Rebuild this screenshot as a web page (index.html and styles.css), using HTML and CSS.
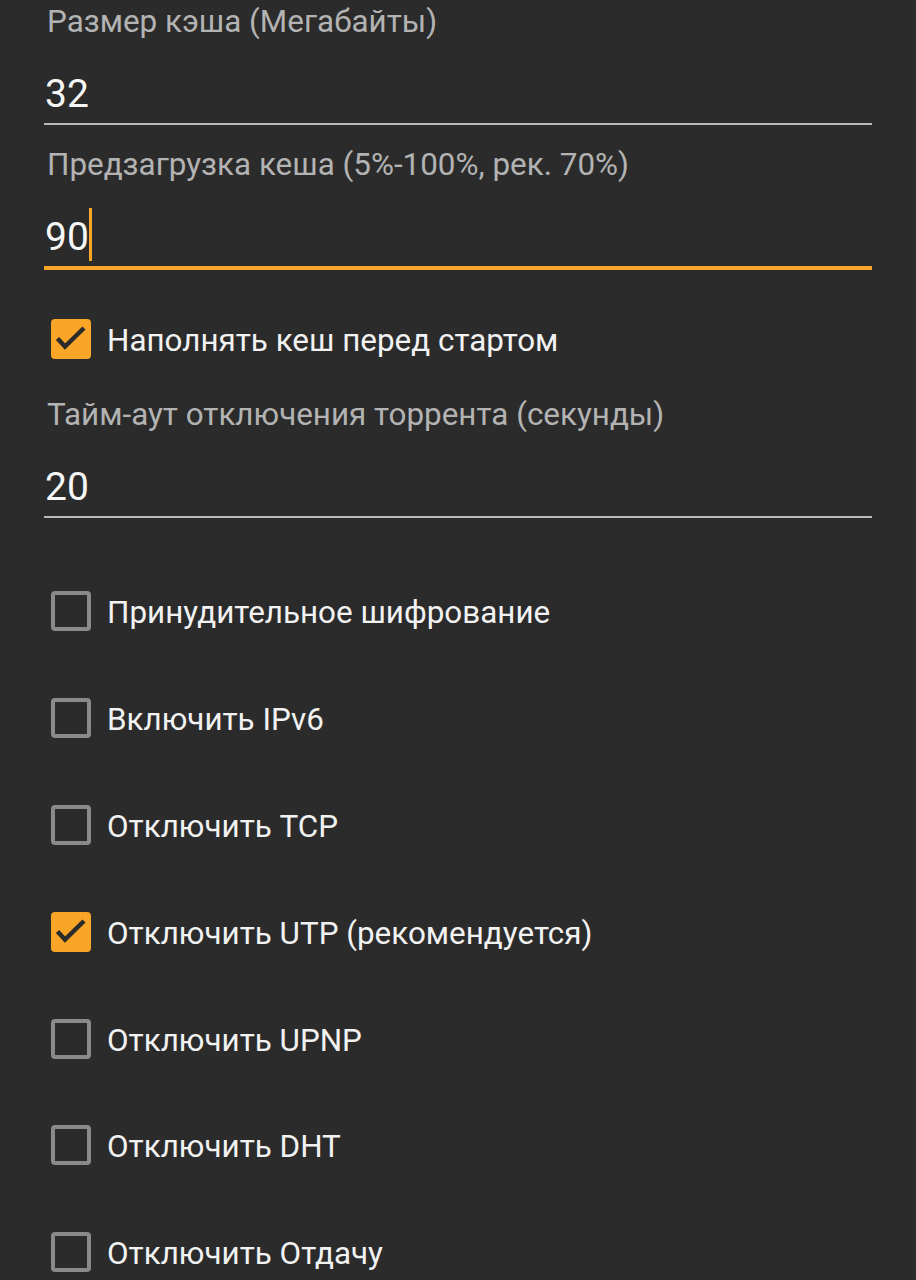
FILE: index.html
```html
<!DOCTYPE html>
<html lang="ru">
<head>
<meta charset="utf-8">
<link rel="stylesheet" href="styles.css">
</head>
<body>
<div class="page">
  <div class="field first">
    <div class="label">Размер кэша (Мегабайты)</div>
    <div class="input">32</div>
  </div>
  <div class="field">
    <div class="label">Предзагрузка кеша (5%-100%, рек. 70%)</div>
    <div class="input focused">90<span class="cursor"></span></div>
  </div>
  <div class="check-row single">
    <span class="box checked"><svg viewBox="0 0 40 40"><polyline points="6.5,19.5 14,27.5 33,9"/></svg></span>
    <span class="text">Наполнять кеш перед стартом</span>
  </div>
  <div class="field third">
    <div class="label">Тайм-аут отключения торрента (секунды)</div>
    <div class="input">20</div>
  </div>
  <div class="list">
    <div class="check-row"><span class="box"></span><span class="text">Принудительное шифрование</span></div>
    <div class="check-row"><span class="box"></span><span class="text">Включить IPv6</span></div>
    <div class="check-row"><span class="box"></span><span class="text">Отключить TCP</span></div>
    <div class="check-row"><span class="box checked"><svg viewBox="0 0 40 40"><polyline points="6.5,19.5 14,27.5 33,9"/></svg></span><span class="text">Отключить UTP (рекомендуется)</span></div>
    <div class="check-row"><span class="box"></span><span class="text">Отключить UPNP</span></div>
    <div class="check-row"><span class="box"></span><span class="text">Отключить DHT</span></div>
    <div class="check-row"><span class="box"></span><span class="text">Отключить Отдачу</span></div>
  </div>
</div>
</body>
</html>
```
FILE: styles.css
```css
html, body {
  margin: 0;
  padding: 0;
  background: #2b2b2b;
  height: 100%;
  overflow: hidden;
}
.page {
  padding: 3px 44px 0 44px;
  font-family: Roboto, "Noto Sans", sans-serif;
  display: flex;
  flex-direction: column;
}
.field {
  display: flex;
  flex-direction: column;
  margin-top: 21px;
}
.field.first { margin-top: 0; }
.field.third { margin-top: 37px; }
.label {
  font-size: 31.4px;
  line-height: 38px;
  height: 38px;
  color: #b3b3b3;
  padding-left: 3px;
  white-space: nowrap;
}
.input {
  margin-top: 28px;
  font-size: 39px;
  line-height: 50px;
  height: 50px;
  color: #f7f7f7;
  padding: 0 0 4px 1px;
  border-bottom: 2px solid #b8b8b8;
  display: flex;
  align-items: center;
}
.input.focused {
  border-bottom: 4px solid #f7a528;
}
.cursor {
  display: inline-block;
  width: 3px;
  height: 53px;
  background: #f7a528;
  margin-left: 0;
  margin-top: -6px;
}
.check-row {
  display: flex;
  align-items: center;
  gap: 16px;
  height: 106.8px;
  padding-left: 7px;
}
.check-row.single {
  height: 40px;
  margin-top: 49px;
}
.list {
  margin-top: 40px;
}
.box {
  box-sizing: border-box;
  width: 40px;
  height: 40px;
  border: 4px solid #8a8a8a;
  border-radius: 4px;
  flex: none;
  display: flex;
}
.box.checked {
  border: none;
  background: #f9a628;
}
.box svg {
  width: 40px;
  height: 40px;
}
.box polyline {
  fill: none;
  stroke: #2b2b2b;
  stroke-width: 4.5;
}
.text {
  font-size: 31.4px;
  color: #f2f2f2;
  white-space: nowrap;
  line-height: 40px;
  padding-top: 4px;
}
```
